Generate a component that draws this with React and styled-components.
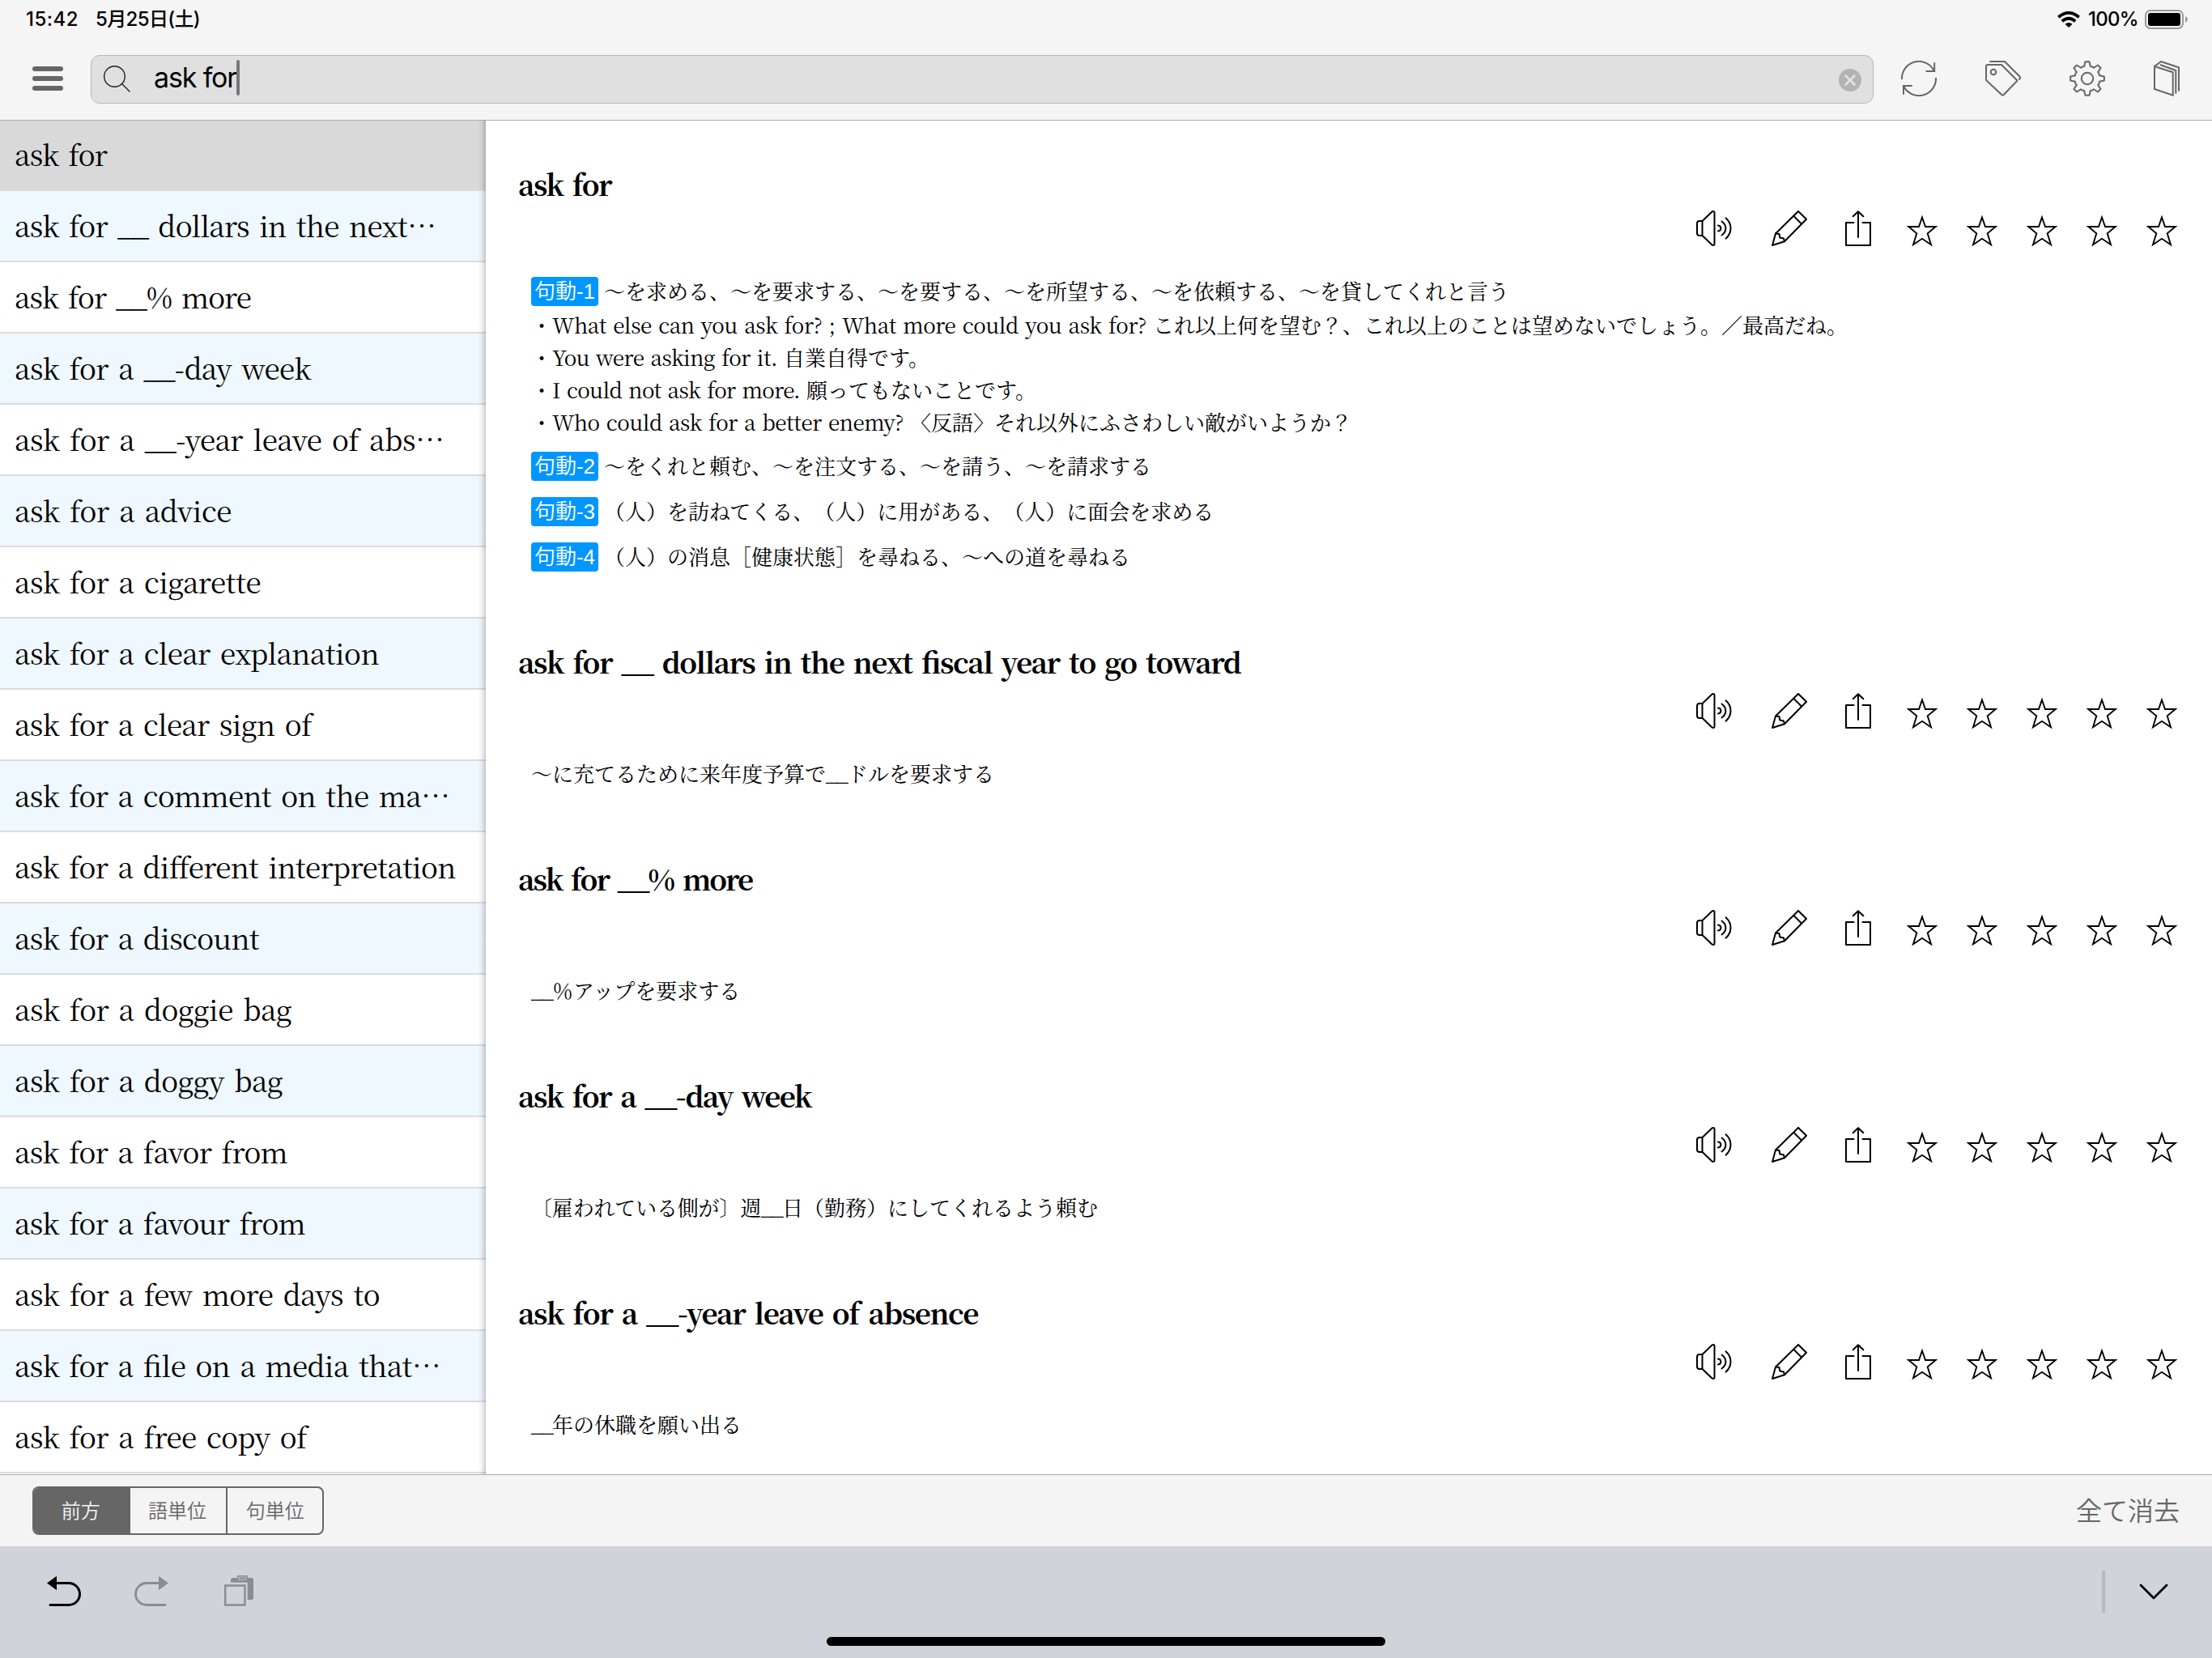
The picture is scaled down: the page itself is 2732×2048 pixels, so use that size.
import React, { useLayoutEffect, useRef, useState } from "react";
import styled, { createGlobalStyle } from "styled-components";

const mincho = `"Noto Serif CJK JP", "Hiragino Mincho ProN", "Liberation Serif", "Noto Sans CJK JP", serif`;
const gothic = `Inter, "Noto Sans CJK JP", sans-serif`;
const kaku = `"Noto Sans CJK JP", sans-serif`;

const GlobalStyle = createGlobalStyle`
  * { box-sizing: border-box; }
  html, body { margin: 0; background: #fff; overflow: hidden; }
  ul { list-style: none; margin: 0; padding: 0; }
  button { border: 0; background: none; padding: 0; margin: 0; font: inherit; color: inherit; }
`;

const Screen = styled.div`
  width: 2732px;
  height: 2048px;
  display: flex;
  flex-direction: column;
  background: #fff;
  color: #000;
  overflow: hidden;
  font-family: ${mincho};
  text-spacing-trim: space-all;
`;

/* Text whose letter spacing is tuned to occupy an exact advance width. */
const FitInner = styled.span`
  display: inline-block;
  white-space: pre;
  font-feature-settings: "liga" 1, "kern" 1;
`;

function Fit({ width, children }) {
  const ref = useRef(null);
  const [spacing, setSpacing] = useState(0);
  useLayoutEffect(() => {
    const natural = ref.current.getBoundingClientRect().width;
    setSpacing((width - natural) / Array.from(children).length);
  }, [width, children]);
  return (
    <FitInner ref={ref} style={{ letterSpacing: spacing }}>
      {children}
    </FitInner>
  );
}

const Header = styled.header`
  height: 149px;
  flex: none;
  background: #f5f5f5;
  border-bottom: 1px solid #acacac;
`;
const StatusBar = styled.div`
  height: 48px;
  padding: 0 30px 0 32px;
  display: flex;
  align-items: center;
  font: 500 24px/48px ${gothic};
`;
const StatusDate = styled.span`
  margin-left: 21px;
`;
const StatusRight = styled.div`
  margin-left: auto;
  display: flex;
  align-items: center;
`;
const Battery = styled.svg`
  margin-left: 8px;
`;
const Wifi = styled.svg`
  margin-right: 10px;
`;
const Toolbar = styled.div`
  height: 100px;
  padding: 20px 40px 0;
  display: flex;
`;
const MenuButton = styled.button`
  width: 38px;
  height: 30px;
  margin: 14px 34px 0 0;
  display: flex;
  flex-direction: column;
  justify-content: space-between;
`;
const MenuBar = styled.span`
  height: 6px;
  border-radius: 3px;
  background: #666;
`;
const SearchBox = styled.div`
  width: 2202px;
  height: 60px;
  padding: 0 14px 0 15px;
  display: flex;
  align-items: center;
  background: #e0e0e0;
  border: 1px solid #b8b8b8;
  border-radius: 11px;
`;
const Query = styled.span`
  margin-left: 28px;
  font: 400 34px/50px ${gothic};
  margin-top: -4px;
`;
const Caret = styled.span`
  width: 4px;
  height: 44px;
  margin-top: -4px;
  border-radius: 2px;
  background: #777;
`;
const ClearButton = styled.button`
  margin: 2px 0 0 auto;
  display: flex;
`;
const ToolIcons = styled.div`
  display: flex;
  margin: 7px 0 0 34px;
  gap: 60px;
  color: #666;
`;
const ToolButton = styled.button`
  height: 44px;
  display: flex;
`;

const Main = styled.main`
  height: 1672px;
  flex: none;
  display: flex;
  overflow: hidden;
`;
const Sidebar = styled.nav`
  width: 600px;
  flex: none;
  display: grid;
  position: relative;
  align-content: start;
  &::after {
    content: "";
    position: absolute;
    inset: 0 0 0 auto;
    width: 10px;
    background: linear-gradient(to right, rgba(0,0,0,0), rgba(0,0,0,0.05) 50%, rgba(0,0,0,0.2));
  }
`;
const WordRow = styled.li`
  height: ${(p) => (p.$first ? 87 : 88)}px;
  padding: ${(p) => (p.$first ? 0 : 1)}px 0 0 18px;
  border-bottom: 2px solid #dcdcde;
  background: ${(p) => (p.$selected ? "#d9d9d9" : p.$tinted ? "#eff7ff" : "#fff")};
  font-size: 35px;
  line-height: 82px;
  word-spacing: 4px;
  white-space: pre;
`;
const Ellipsis = styled.span`
  font-size: 36px;
`;

const Article = styled.article`
  flex: 1;
  padding: 54px 40px 0;
`;
const Entry = styled.section`
  height: ${(p) => p.$height}px;
`;
const Headword = styled.h2`
  margin: 0;
  height: ${(p) => (p.$first ? 57 : 63)}px;
  font-size: 35px;
  line-height: 48px;
  font-weight: 700;
  word-spacing: 4px;
`;
const Actions = styled.div`
  height: 50px;
  display: flex;
  justify-content: flex-end;
  align-items: flex-start;
`;
const ActionIcon = styled.button`
  height: 44px;
  display: flex;
  margin-right: ${(p) => p.$gap}px;
`;
const Stars = styled.div`
  display: flex;
  gap: 30px;
  padding-top: 4px;
`;
const Senses = styled.div`
  padding: 30px 0 0 16px;
  font-size: 26px;
`;
const Sense = styled.div`
  margin-bottom: 16px;
`;
const Line = styled.div`
  height: 40px;
  display: flex;
  align-items: baseline;
  line-height: ${(p) => (p.$example ? 41 : 38)}px;
  word-spacing: 2px;
  white-space: pre;
`;
const Badge = styled.span`
  width: 83px;
  height: 36px;
  margin-right: 7px;
  display: inline-flex;
  align-self: center;
  justify-content: center;
  border-radius: 4px;
  background: #0096ff;
  color: #fff;
  font: 350 26px/36px "Liberation Sans", ${kaku};
`;

const Footer = styled.footer`
  height: 89px;
  flex: none;
  padding: 0 40px;
  display: flex;
  align-items: center;
  justify-content: space-between;
  border-top: 1px solid #acacac;
  background: #f4f4f4;
  color: #666;
  font-family: ${kaku};
  font-weight: 350;
`;
const Segmented = styled.div`
  width: 360px;
  height: 60px;
  display: grid;
  grid-template-columns: repeat(3, 1fr);
  border: 2px solid #666;
  border-radius: 8px;
  overflow: hidden;
`;
const Segment = styled.button`
  border-left: ${(p) => (p.$divided ? "2px solid #666" : "0")};
  background: ${(p) => (p.$active ? "#666" : "transparent")};
  color: ${(p) => (p.$active ? "#f4f4f4" : "#666")};
  padding: 0 ${(p) => (p.$divided ? 0 : p.$active ? 3 : 2)}px 2px 0;
  font-size: 24px;
  line-height: 54px;
  text-align: center;
`;
const ClearAll = styled.button`
  padding-bottom: 4px;
  font-size: 32px;
`;

const KeyboardBar = styled.div`
  height: 138px;
  flex: none;
  display: grid;
  grid-template-rows: 112px 11px;
  background: #d0d3d9;
`;
const KeyboardTools = styled.div`
  padding: 30px 54px 0 58px;
  display: flex;
  align-items: flex-start;
`;
const KeyButton = styled.button`
  height: 52px;
  display: flex;
  margin-right: ${(p) => p.$gap || 0}px;
  color: ${(p) => (p.$dim ? "#8a8c8f" : "#000")};
`;
const Divider = styled.span`
  width: 4px;
  height: 52px;
  margin: 0 42px 0 auto;
  background: #b7b9bc;
`;
const HomeIndicator = styled.div`
  width: 690px;
  height: 11px;
  justify-self: center;
  border-radius: 6px;
  background: #000;
`;

const stroke = { fill: "none", stroke: "currentColor", strokeWidth: 2, strokeLinecap: "round", strokeLinejoin: "round" };

const SearchIcon = () => (
  <svg width="34" height="34" viewBox="0 0 34 34" {...stroke} stroke="#222" strokeWidth="1.4">
    <circle cx="13.5" cy="13.5" r="12.8" />
    <path d="M22.6 22.6 32 32" />
  </svg>
);
const ClearIcon = () => (
  <svg width="28" height="28" viewBox="0 0 28 28">
    <circle cx="14" cy="14" r="14" fill="#b3b3b3" />
    <path d="M8.500 8.500l11 11M19.500 8.500l-11 11" stroke="#e4e4e4" strokeWidth="2.6" strokeLinecap="round" />
  </svg>
);
const RefreshIcon = () => (
  <svg width="44" height="44" viewBox="0 0 44 44" {...stroke} strokeLinecap="butt" strokeLinejoin="miter">
    <path d="M1 23A21 21 0 0 1 41 13M43 21A21 21 0 0 1 3 31" />
    <path d="M41.200 2.300V13H30.500M3 41.700V31h10.700" />
  </svg>
);
const TagIcon = () => (
  <svg width="44" height="44" viewBox="0 0 44 44" {...stroke}>
    <path d="M1 7q0-2 2-2h17l19 19q.6.7 0 1.300L22.500 42.300q-1 .8-2 0L1 24z" />
    <circle cx="10" cy="14" r="3.300" />
    <path d="M6 1h18l18.700 18.700q1 1.500-.7 3.300" />
  </svg>
);
const gearPath = (() => {
  const pts = [];
  for (let i = 0; i < 8; i++) {
    const base = (i * Math.PI) / 4 - Math.PI / 2;
    [[-0.39, 15.8], [-0.25, 15.4], [-0.12, 21], [0.12, 21], [0.25, 15.4]].forEach(([a, r]) => {
      pts.push(`${(22 + r * Math.cos(base + a)).toFixed(2)} ${(22 + r * Math.sin(base + a)).toFixed(2)}`);
    });
  }
  return `M${pts.join("L")}Z`;
})();
const GearIcon = () => (
  <svg width="44" height="44" viewBox="0 0 44 44" {...stroke}>
    <path d={gearPath} />
    <circle cx="22" cy="22" r="7.200" />
  </svg>
);
const BookIcon = () => (
  <svg width="32" height="44" viewBox="0 0 32 44" {...stroke} strokeLinejoin="miter" strokeLinecap="butt">
    <path d="M1 7l22.700 7.300V42.700L1 35zM1 7l8-6 22 7.300V37.700M8 5l19.300 7v28.700" />
  </svg>
);
const SpeakerIcon = () => (
  <svg width="44" height="44" viewBox="0 0 44 44" {...stroke}>
    <path d="M7.500 13H4q-3 0-3 3v12q0 3 3 3h3.500zM7.500 13 19.500 1.500q3-1.200 3 1v39q0 2.200-3 1L7.500 31" />
    <path d="M27 18.500c4.500.3 4.500 6.700 0 7M31.500 13.500c6.500 4.500 6.500 12.500 0 17M36.500 9.300c8 7 8 18.400 0 25.400" />
  </svg>
);
const PencilIcon = () => (
  <svg width="44" height="44" viewBox="0 0 44 44" {...stroke}>
    <path d="M33 1l10 9.700L16 38.300 1 43l4-14.500z" />
    <path d="M27.500 7l9.500 9.500M5 28.500l4.500.5.800 4.500 4.700 1 1 3.800" />
  </svg>
);
const ShareIcon = () => (
  <svg width="32" height="44" viewBox="0 0 32 44" {...stroke}>
    <path d="M10.500 15H1v28h30V15h-9.500" />
    <path d="M16 33V1.500M9.700 7.300 16 1.200l6.300 6.100" />
  </svg>
);
const StarIcon = () => (
  <svg width="44" height="42" viewBox="0 0 44 42" fill="none" stroke="#000" strokeWidth="1.900">
    <path d="M22 4.500 26 16H38.800L28.700 24.300 33 38.200 22 30.800 11 38.200 15.300 24.300 5.200 16H18z" />
  </svg>
);
const UndoIcon = () => (
  <svg width="43" height="52" viewBox="0 0 43 52">
    <path d="M0 15.500 12 6.700v17.600z" fill="currentColor" />
    <path d="M10 15.500H27A13.500 13.500 0 0 1 27 42.500H4" fill="none" stroke="currentColor" strokeWidth="3" strokeLinecap="round" />
  </svg>
);
const RedoIcon = () => (
  <svg width="43" height="52" viewBox="0 0 43 52">
    <path d="M42 15.500 30 6.700v17.600z" fill="currentColor" />
    <path d="M32 15.500H15A13.500 13.500 0 0 0 15 42.500H38" fill="none" stroke="currentColor" strokeWidth="2.800" strokeLinecap="round" />
  </svg>
);
const PasteIcon = () => (
  <svg width="37" height="52" viewBox="0 0 37 52" fill="currentColor">
    <path d="M1.200 18.500h24.300v24H1.200z" fill="none" stroke="currentColor" strokeWidth="2.400" />
    <path d="M8 14.700V12q0-3 3-3h5V6h12.700v3H33q3 0 3 3v21.300q0 3-3 3h-4.300V14.700z" />
    <path d="M18 8h8.700v3.200H18z" fill="none" stroke="#c4c7cb" strokeWidth="1" />
  </svg>
);
const ChevronIcon = () => (
  <svg width="36" height="52" viewBox="0 0 36 52" fill="none" stroke="#000" strokeWidth="2.800" strokeLinecap="round" strokeLinejoin="round">
    <path d="M2 18l16 16 16-16" />
  </svg>
);

const words = [
  ["ask for", 114], ["ask for __ dollars in the next", 485, true], ["ask for __% more", 292],
  ["ask for a __-day week", 366], ["ask for a __-year leave of abs", 495, true], ["ask for a advice", 268],
  ["ask for a cigarette", 304], ["ask for a clear explanation", 450], ["ask for a clear sign of", 367],
  ["ask for a comment on the ma", 502, true], ["ask for a different interpretation", 544],
  ["ask for a discount", 302], ["ask for a doggie bag", 342], ["ask for a doggy bag", 331],
  ["ask for a favor from", 337], ["ask for a favour from", 359], ["ask for a few more days to", 451],
  ["ask for a file on a media that", 490, true], ["ask for a free copy of", 361],
];

/* Each line is a list of runs: plain strings keep their natural width, [text, width] pairs are fitted. */
const entries = [
  {
    title: "ask for", width: 115, height: 590,
    senses: [
      { tag: "句動-1", line: ["〜を求める、〜を要求する、〜を要する、〜を所望する、〜を依頼する、〜を貸してくれと言う"],
        examples: [
          ["・", ["What else can you ask for? ; What more could you ask for? ", 742], "これ以上何を望む？、これ以上のことは望めないでしょう。／最高だね。"],
          ["・", ["You were asking for it. ", 286], "自業自得です。"],
          ["・", ["I could not ask for more. ", 314], "願ってもないことです。"],
          ["・", ["Who could ask for a better enemy? ", 442], "〈反語〉それ以外にふさわしい敵がいようか？"],
        ] },
      { tag: "句動-2", line: ["〜をくれと頼む、〜を注文する、〜を請う、〜を請求する"] },
      { tag: "句動-3", line: ["（人）を訪ねてくる、（人）に用がある、（人）に面会を求める"] },
      { tag: "句動-4", line: ["（人）の消息［健康状態］を尋ねる、〜への道を尋ねる"] },
    ],
  },
  { title: "ask for __ dollars in the next fiscal year to go toward", width: 891, height: 268,
    senses: [{ line: ["〜に充てるために来年度予算で", ["__", 26], "ドルを要求する"] }] },
  { title: "ask for __% more", width: 289, height: 268,
    senses: [{ line: [["__", 26], "％アップを要求する"] }] },
  { title: "ask for a __-day week", width: 362, height: 268,
    senses: [{ line: [["〔雇われている側が〕週", 284], ["__", 26], "日（勤務）にしてくれるよう頼む"] }] },
  { title: "ask for a __-year leave of absence", width: 568, height: 268,
    senses: [{ line: [["__", 26], "年の休職を願い出る"] }] },
];

const Runs = ({ runs }) =>
  runs.map((run, i) =>
    typeof run === "string" ? <span key={i}>{run}</span> : <Fit key={i} width={run[1]}>{run[0]}</Fit>
  );

const EntryView = ({ entry, first }) => (
  <Entry $height={entry.height}>
    <Headword $first={first}><Fit width={entry.width}>{entry.title}</Fit></Headword>
    <Actions>
      <ActionIcon $gap={49}><SpeakerIcon /></ActionIcon>
      <ActionIcon $gap={47}><PencilIcon /></ActionIcon>
      <ActionIcon $gap={41}><ShareIcon /></ActionIcon>
      <Stars>{[1, 2, 3, 4, 5].map((n) => <StarIcon key={n} />)}</Stars>
    </Actions>
    <Senses>
      {entry.senses.map((sense, i) => (
        <Sense key={i}>
          <Line>{sense.tag && <Badge>{sense.tag}</Badge>}<Runs runs={sense.line} /></Line>
          {sense.examples && sense.examples.map((ex, j) => <Line key={j} $example><Runs runs={ex} /></Line>)}
        </Sense>
      ))}
    </Senses>
  </Entry>
);

export default function App() {
  return (
    <Screen lang="ja">
      <GlobalStyle />
      <Header>
        <StatusBar>
          <Fit width={65}>15:42</Fit>
          <StatusDate><Fit width={129}>5月25日(土)</Fit></StatusDate>
          <StatusRight>
            <Wifi width="28" height="20" viewBox="0 0 28 20" fill="none" stroke="#000" strokeWidth="3.800">
              <path d="M1.300 7.300q12.700-10.800 25.400 0M5.800 12.200q8.200-7 16.400 0" />
              <path d="M9.500 15.800q4.500-3.600 9 0L14 20z" fill="#000" stroke="none" />
            </Wifi>
            <Fit width={62}>100%</Fit>
            <Battery width="53" height="24" viewBox="0 0 53 24">
              <rect x="1" y="1" width="46" height="22" rx="6" fill="none" stroke="#999" strokeWidth="2" />
              <rect x="4" y="4" width="40" height="16" rx="3" />
              <path d="M50 8q3 1.500 3 4t-3 4z" fill="#999" />
            </Battery>
          </StatusRight>
        </StatusBar>
        <Toolbar>
          <MenuButton><MenuBar /><MenuBar /><MenuBar /></MenuButton>
          <SearchBox>
            <SearchIcon />
            <Query><Fit width={102}>ask for</Fit></Query>
            <Caret />
            <ClearButton><ClearIcon /></ClearButton>
          </SearchBox>
          <ToolIcons>
            <ToolButton><RefreshIcon /></ToolButton>
            <ToolButton><TagIcon /></ToolButton>
            <ToolButton><GearIcon /></ToolButton>
            <ToolButton><BookIcon /></ToolButton>
          </ToolIcons>
        </Toolbar>
      </Header>
      <Main>
        <Sidebar>
          <ul>
            {words.map(([word, width, cut], i) => (
              <WordRow key={word} $first={i === 0} $selected={i === 0} $tinted={i % 2 === 1}>
                <Fit width={width}>{word}</Fit>{cut && <Ellipsis>…</Ellipsis>}
              </WordRow>
            ))}
          </ul>
        </Sidebar>
        <Article>
          {entries.map((entry, i) => <EntryView key={entry.title} entry={entry} first={i === 0} />)}
        </Article>
      </Main>
      <Footer>
        <Segmented>
          <Segment $active>前方</Segment>
          <Segment>語単位</Segment>
          <Segment $divided>句単位</Segment>
        </Segmented>
        <ClearAll>全て消去</ClearAll>
      </Footer>
      <KeyboardBar>
        <KeyboardTools>
          <KeyButton $gap={65}><UndoIcon /></KeyButton>
          <KeyButton $dim $gap={68}><RedoIcon /></KeyButton>
          <KeyButton $dim><PasteIcon /></KeyButton>
          <Divider />
          <KeyButton><ChevronIcon /></KeyButton>
        </KeyboardTools>
        <HomeIndicator />
      </KeyboardBar>
    </Screen>
  );
}
